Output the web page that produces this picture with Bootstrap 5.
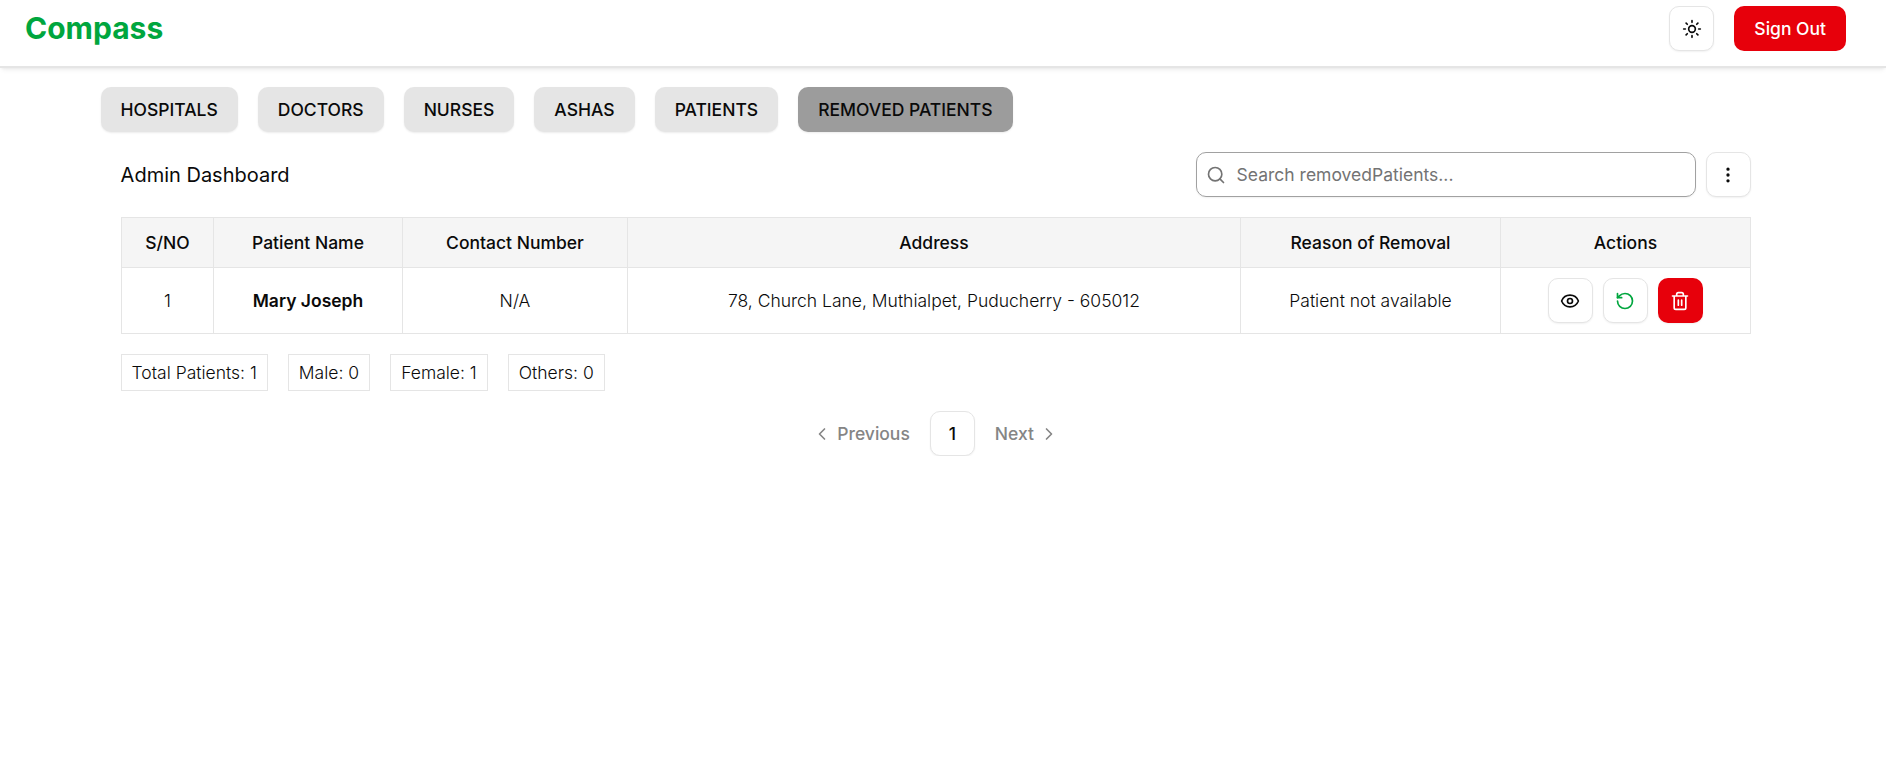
<!DOCTYPE html>
<html lang="en">
<head>
<meta charset="utf-8">
<meta name="viewport" content="width=device-width, initial-scale=1">
<title>Compass</title>
<link href="https://cdn.jsdelivr.net/npm/bootstrap@5.3.0/dist/css/bootstrap.min.css" rel="stylesheet">
<style>
  body { font-family: Inter, "Liberation Sans", sans-serif; font-size: 17.5px; line-height: 25px; color: #0a0a0a; background: #fff; }
  svg { width: 20px; height: 20px; fill: none; stroke: currentColor; stroke-width: 2; stroke-linecap: round; stroke-linejoin: round; display: block; flex: none; }
  .topbar { height: 68px; padding: 6px 40px 15px 25px; border-bottom: 2px solid #e5e5e5; box-shadow: 0 4px 5px -2px rgba(0,0,0,.06), 0 1px 3px -1px rgba(0,0,0,.08); }
  .brand { font-size: 30px; line-height: 45px; font-weight: 700; color: #00a63e; }
  .btn { --bs-btn-font-size: 17.5px; --bs-btn-line-height: 25px; --bs-btn-font-weight: 500; --bs-btn-border-radius: 10px; --bs-btn-padding-y: 0; --bs-btn-padding-x: 20px; --bs-btn-border-width: 0; --bs-btn-color: #0a0a0a; height: 45px; white-space: nowrap; }
  .btn-square { width: 45px; padding: 0; border: 1px solid #e5e5e5; background: #fff; box-shadow: 0 1px 2px rgba(0,0,0,.06); }
  .btn-red { background: #e7000b; color: #fff; border: 0; }
  .btn-tab { background: #e5e5e5; box-shadow: 0 1px 2px rgba(0,0,0,.08); }
  .btn-tab.current { background: #9c9c9c; }
  .actions { gap: 20px; }
  .tools { gap: 10px; }
  .restore { color: #00a63e; }
  .tabs { gap: 20px; padding: 19px 0 0 100.5px; }
  .panel { margin: 20px 135.4px 0 120.6px; }
  .title { font-size: 20px; line-height: 30px; }
  .search { width: 500px; height: 45px; border: 1px solid #a1a1a1; border-radius: 10px; padding: 0 9px; gap: 11px; box-shadow: 0 1px 2px rgba(0,0,0,.06); color: #737373; }
  .search input { font: inherit; color: inherit; padding: 0; background: none; }
  .search input::placeholder { color: #737373; opacity: 1; }
  .records { table-layout: fixed; border-collapse: collapse; width: 1629.5px; margin: 20px 0 20px .4px; text-align: center; font-weight: 300; }
  .records th, .records td { border: 1px solid #e5e5e5; padding: 0; }
  .records th { height: 50px; font-weight: 500; background: #f5f5f5; text-align: center; }
  .records td { height: 66px; }
  .stat { border: 1px solid #e5e5e5; padding: 5px 10px; font-weight: 300; height: 37px; }
  .pager { margin-top: 20px; height: 45px; font-weight: 500; }
  .muted { color: #858585; gap: 5px; }
</style>
</head>
<body>
<header class="topbar d-flex justify-content-between align-items-start">
  <div class="brand">Compass</div>
  <div class="actions d-flex">
    <button class="btn btn-square d-flex align-items-center justify-content-center" aria-label="Theme"><svg viewBox="0 0 24 24"><circle cx="12" cy="12" r="4"/><path d="M12 2v2M12 20v2M4.93 4.93l1.41 1.41M17.66 17.66l1.41 1.41M2 12h2M20 12h2M6.34 17.66l-1.41 1.41M19.07 4.93l-1.41 1.41"/></svg></button>
    <button class="btn btn-red">Sign Out</button>
  </div>
</header>
<main>
  <nav class="tabs d-flex">
    <button class="btn btn-tab">HOSPITALS</button>
    <button class="btn btn-tab">DOCTORS</button>
    <button class="btn btn-tab">NURSES</button>
    <button class="btn btn-tab">ASHAS</button>
    <button class="btn btn-tab">PATIENTS</button>
    <button class="btn btn-tab current">REMOVED PATIENTS</button>
  </nav>
  <section class="panel">
    <div class="d-flex align-items-center justify-content-between">
      <div class="title">Admin Dashboard</div>
      <div class="tools d-flex">
        <label class="search d-flex align-items-center"><svg viewBox="0 0 24 24"><circle cx="11" cy="11" r="8"/><path d="m21 21-4.34-4.34"/></svg><input class="flex-grow-1 border-0" type="text" placeholder="Search removedPatients..."></label>
        <button class="btn btn-square d-flex align-items-center justify-content-center" aria-label="More"><svg viewBox="0 0 24 24"><circle cx="12" cy="12" r="1"/><circle cx="12" cy="5" r="1"/><circle cx="12" cy="19" r="1"/></svg></button>
      </div>
    </div>
    <table class="records">
      <colgroup><col style="width:92px"><col style="width:189px"><col style="width:225px"><col style="width:613px"><col style="width:260px"><col style="width:250px"></colgroup>
      <thead><tr><th>S/NO</th><th>Patient Name</th><th>Contact Number</th><th>Address</th><th>Reason of Removal</th><th>Actions</th></tr></thead>
      <tbody><tr>
        <td>1</td><td class="fw-semibold">Mary Joseph</td><td>N/A</td><td>78, Church Lane, Muthialpet, Puducherry - 605012</td><td>Patient not available</td>
        <td><div class="tools d-flex justify-content-center">
          <button class="btn btn-square d-flex align-items-center justify-content-center" aria-label="View"><svg viewBox="0 0 24 24"><path d="M2.062 12.348a1 1 0 0 1 0-.696 10.75 10.75 0 0 1 19.876 0 1 1 0 0 1 0 .696 10.75 10.75 0 0 1-19.876 0"/><circle cx="12" cy="12" r="3"/></svg></button>
          <button class="btn btn-square restore d-flex align-items-center justify-content-center" aria-label="Restore"><svg viewBox="0 0 24 24"><path d="M3 12a9 9 0 1 0 9-9 9.75 9.75 0 0 0-6.74 2.74L3 8"/><path d="M3 3v5h5"/></svg></button>
          <button class="btn btn-square btn-red d-flex align-items-center justify-content-center" aria-label="Delete"><svg viewBox="0 0 24 24"><path d="M3 6h18M19 6v14a2 2 0 0 1-2 2H7a2 2 0 0 1-2-2V6M8 6V4a2 2 0 0 1 2-2h4a2 2 0 0 1 2 2v2M10 11v6M14 11v6"/></svg></button>
        </div></td>
      </tr></tbody>
    </table>
    <div class="actions d-flex">
      <div class="stat">Total Patients: 1</div>
      <div class="stat">Male: 0</div>
      <div class="stat">Female: 1</div>
      <div class="stat">Others: 0</div>
    </div>
    <nav class="pager actions d-flex align-items-center justify-content-center">
      <span class="muted d-flex align-items-center"><svg viewBox="0 0 24 24"><path d="m15 18-6-6 6-6"/></svg>Previous</span>
      <button class="btn btn-square">1</button>
      <span class="muted d-flex align-items-center">Next<svg viewBox="0 0 24 24"><path d="m9 18 6-6-6-6"/></svg></span>
    </nav>
  </section>
</main>
<script src="https://cdn.jsdelivr.net/npm/bootstrap@5.3.0/dist/js/bootstrap.bundle.min.js"></script>
</body>
</html>
